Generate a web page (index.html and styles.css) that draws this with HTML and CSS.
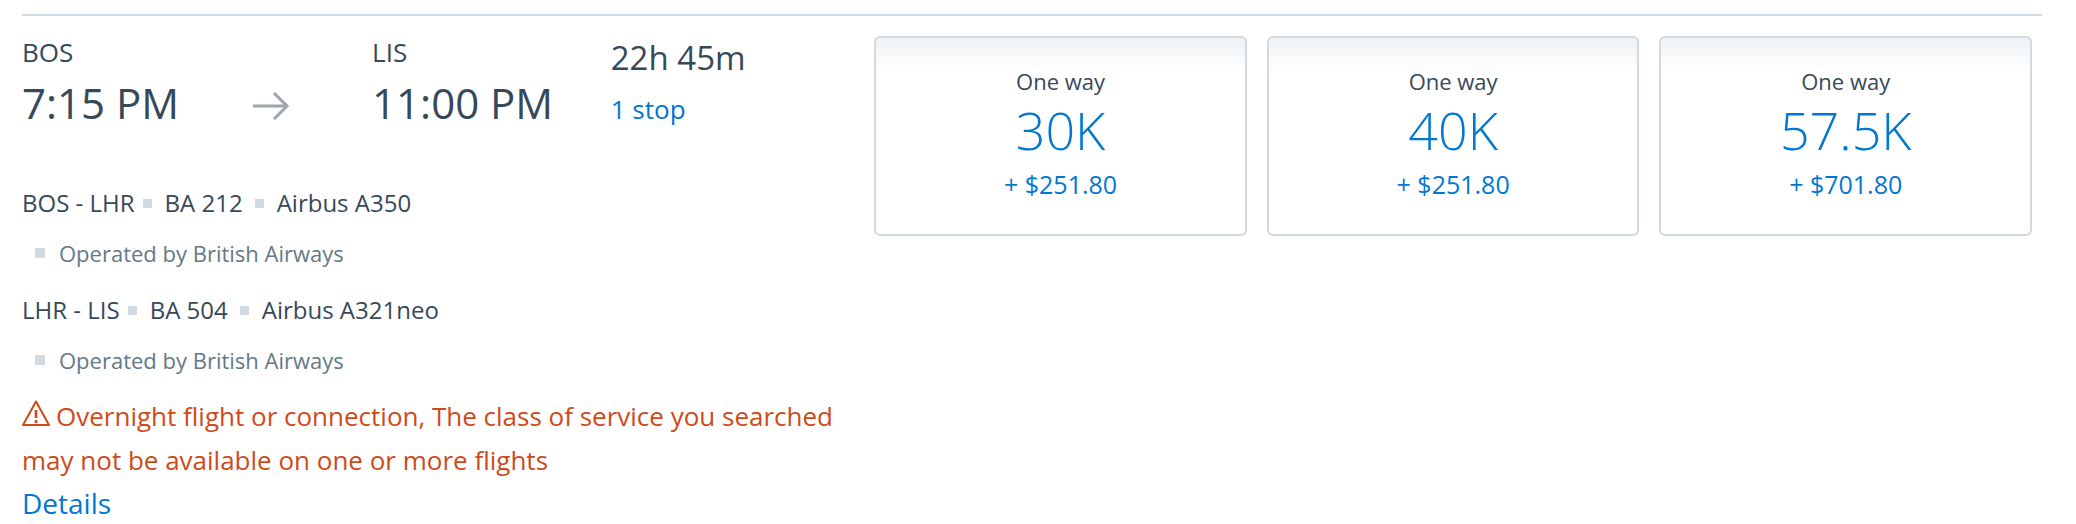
FILE: index.html
```html
<!DOCTYPE html>
<html lang="en">
<head>
    <meta charset="UTF-8">
    <meta name="viewport" content="width=device-width, initial-scale=1.0">
    <title>Flight Results</title>
    <link rel="stylesheet" href="styles.css">
</head>
<body>
    <div class="flight">
        <div class="info">
            <div class="summary">
                <div class="depart">
                    <div class="airport">BOS</div>
                    <div class="time">7:15 PM</div>
                </div>
                <svg class="arrow" width="38" height="30" viewBox="0 0 38 30" fill="none" stroke="#9da6ab" stroke-width="3">
                    <path d="M1 15H35M22 2L35 15L22 28"/>
                </svg>
                <div class="arrive">
                    <div class="airport">LIS</div>
                    <div class="time">11:00 PM</div>
                </div>
                <div class="duration">
                    <div class="total">22h 45m</div>
                    <a class="stops" href="#">1 stop</a>
                </div>
            </div>
            <div class="segment">
                <span>BOS - LHR</span>
                <span class="dot"></span>
                <span>BA 212</span>
                <span class="dot wide"></span>
                <span>Airbus A350</span>
            </div>
            <div class="operated">Operated by British Airways</div>
            <div class="segment">
                <span>LHR - LIS</span>
                <span class="dot"></span>
                <span>BA 504</span>
                <span class="dot wide"></span>
                <span>Airbus A321neo</span>
            </div>
            <div class="operated">Operated by British Airways</div>
            <p class="warning"><svg class="alert" width="28" height="26" viewBox="0 0 28 26" fill="none" stroke="#cf4a1a" stroke-width="2">
                    <path d="M14 1.500L27 25H1Z" stroke-linejoin="round"/>
                    <path d="M14 10V18M14 20V23" stroke-width="2.6"/>
                </svg>Overnight flight or connection, The class of service you searched may not be available on one or more flights</p>
            <a class="details" href="#">Details</a>
        </div>
        <div class="fares">
            <button class="fare">
                <span class="type">One way</span>
                <span class="miles">30K</span>
                <span class="tax">+ $251.80</span>
            </button>
            <button class="fare">
                <span class="type">One way</span>
                <span class="miles">40K</span>
                <span class="tax">+ $251.80</span>
            </button>
            <button class="fare">
                <span class="type">One way</span>
                <span class="miles">57.5K</span>
                <span class="tax">+ $701.80</span>
            </button>
        </div>
    </div>
</body>
</html>
```

FILE: styles.css
```css
* { box-sizing: border-box; }
body { font-family: "Open Sans", sans-serif; margin: 0; padding: 14px 34px 0 22px; color: #36495a; background: #fff; }
a { color: #0078d2; text-decoration: none; }

.flight { display: flex; border-top: 2px solid #d0dae0; padding: 18px 10px 0 0; }
.info { flex: 0 0 42.4%; }

.summary { display: flex; height: 147px; }
.depart { flex: 0 0 27%; }
.arrow { flex: none; margin-top: 57px; }
.arrive { flex: 0 0 28%; margin-left: 82px; }
.airport { font-size: 26px; line-height: 36px; }
.time { font-size: 42px; line-height: 66px; white-space: nowrap; }
.total { font-size: 33px; line-height: 48px; }
.stops { font-size: 26px; line-height: 54px; }

.segment { display: flex; align-items: center; font-size: 24px; line-height: 44px; }
.dot { width: 9px; height: 9px; margin: 0 13px 0 8px; background: #d0dae0; }
.dot.wide { margin-left: 12px; }
.operated { display: flex; align-items: center; gap: 14px; padding-left: 13px; margin-bottom: 7px; font-size: 22px; line-height: 56px; color: #627a88; }
.operated::before { content: ""; width: 10px; height: 10px; background: #d0dae0; }
.operated:nth-of-type(5) { margin-bottom: 6px; }

.warning { margin: 0; padding-right: 16px; font-size: 26px; line-height: 44px; color: #cf4a1a; }
.alert { margin-right: 6px; }
.details { font-size: 28px; line-height: 43px; }

.fares { flex: 1; display: flex; gap: 20px; align-items: flex-start; margin-top: 2px; }
.fare { flex: 1; display: flex; flex-direction: column; align-items: center; height: 200px; padding: 24px 10px; font: inherit; color: #0078d2; background: linear-gradient(#eff2f5, #fff 36px); border: 2px solid #d0dae0; border-radius: 6px; cursor: pointer; }
.type { font-size: 22px; line-height: 38px; color: #36495a; }
.miles { font-size: 52px; line-height: 60px; font-weight: 300; }
.tax { font-size: 25px; line-height: 48px; }
```
